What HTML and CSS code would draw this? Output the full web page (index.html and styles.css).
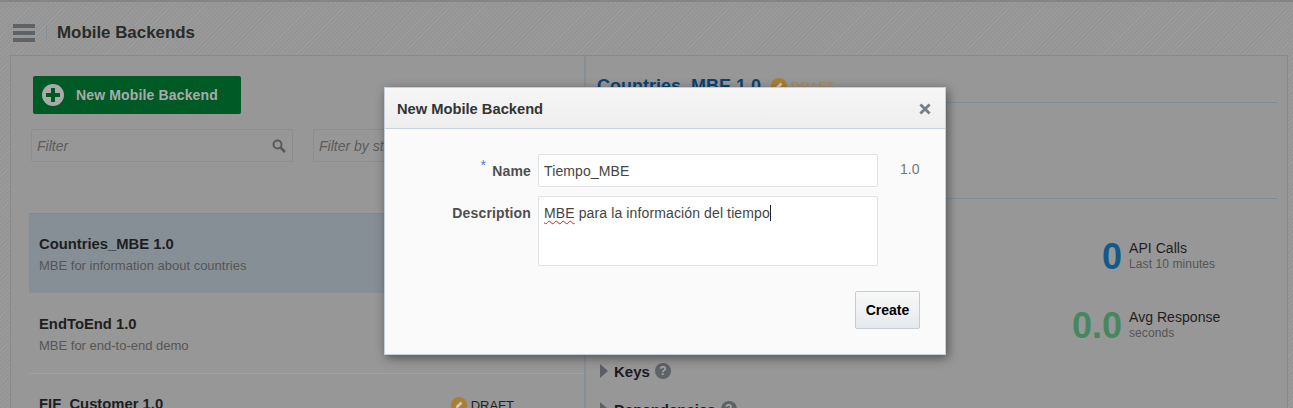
FILE: index.html
```html
<!DOCTYPE html>
<html lang="en">
<head>
<meta charset="utf-8">
<title>Mobile Backends</title>
<link rel="stylesheet" href="styles.css">
</head>
<body>
<div class="page">
  <header class="topbar">
    <svg class="burger" width="22" height="18" viewBox="0 0 22 18"><rect y="0" width="22" height="4" /><rect y="7" width="22" height="4" /><rect y="14" width="22" height="4" /></svg>
    <span class="topsep"></span>
    <h1 class="pagetitle">Mobile Backends</h1>
  </header>
  <main class="panel">
    <section class="left">
      <div class="leftpad">
        <button class="newbtn">
          <svg width="22" height="22" viewBox="0 0 22 22"><circle cx="11" cy="11" r="11" fill="#aaaaaa"/><path d="M9 4h4v5h5v4h-5v5H9v-5H4V9h5z" fill="#005a25"/></svg>
          <span>New Mobile Backend</span>
        </button>
        <div class="filters">
          <div class="filter main"><span>Filter</span>
            <svg width="14" height="14" viewBox="0 0 14 14"><circle cx="5.5" cy="5.5" r="4" fill="none" stroke="#5a5a5a" stroke-width="2"/><path d="M8.5 8.5L13 13" stroke="#5a5a5a" stroke-width="2.6"/></svg>
          </div>
          <div class="filter second"><span>Filter by status</span></div>
        </div>
      </div>
      <ul class="list">
        <li class="item selected"><div class="name">Countries_MBE 1.0</div><div class="desc">MBE for information about countries</div></li>
        <li class="item"><div class="name">EndToEnd 1.0</div><div class="desc">MBE for end-to-end demo</div></li>
        <li class="item third">
          <div class="name">FIF_Customer 1.0</div>
          <div class="draft"><svg width="16" height="16" viewBox="0 0 16 16"><circle cx="8" cy="8" r="8" fill="#aa7f30"/><path d="M4.5 11.5l1-3 4-4 2 2-4 4z" fill="#c8c8c8"/></svg><span>DRAFT</span></div>
        </li>
      </ul>
    </section>
    <section class="right">
      <div class="rtitle">
        <h2>Countries_MBE 1.0</h2>
        <svg width="16" height="16" viewBox="0 0 16 16"><circle cx="8" cy="8" r="8" fill="#aa7f30"/><path d="M4.5 11.5l1-3 4-4 2 2-4 4z" fill="#c8c8c8"/></svg>
        <span class="rdraft">DRAFT</span>
      </div>
      <div class="rbody">
        <div class="stats">
          <div class="stat">
            <span class="num blue">0</span>
            <div class="lab"><div class="l1">API Calls</div><div class="l2">Last 10 minutes</div></div>
          </div>
          <div class="stat">
            <span class="num green">0.0</span>
            <div class="lab"><div class="l1">Avg Response</div><div class="l2">seconds</div></div>
          </div>
        </div>
        <div class="acc">
          <div class="accrow"><span class="tri"></span><strong>Keys</strong><span class="help">?</span></div>
          <div class="accrow"><span class="tri"></span><strong>Dependencies</strong><span class="help">?</span></div>
        </div>
      </div>
    </section>
  </main>
</div>
<div class="dialog">
  <div class="dhead"><span>New Mobile Backend</span><svg class="close" width="12" height="12" viewBox="0 0 12 12"><path d="M1.4 1.4l9.2 9.2M10.6 1.4l-9.2 9.2" stroke="#74808a" stroke-width="2.8"/></svg></div>
  <div class="dbody">
    <div class="frow namerow">
      <label class="flabel"><sup>*</sup> Name</label>
      <div class="finput">Tiempo_MBE</div>
      <span class="ver">1.0</span>
    </div>
    <div class="frow">
      <label class="flabel">Description</label>
      <div class="finput area"><span class="spell">MBE</span> para la información del tiempo<span class="caret"></span></div>
    </div>
    <div class="dfoot"><button class="create">Create</button></div>
  </div>
</div>
</body>
</html>
```
FILE: styles.css
```css
* { box-sizing: border-box; }
html, body { margin: 0; padding: 0; height: 408px; overflow: hidden; }
body { font-family: "Liberation Sans", Arial, sans-serif; color: #333; position: relative; }
.page {
  height: 408px; width: 1293px; overflow: hidden;
  background: repeating-linear-gradient(135deg, #9a9a9a 0 1.5px, #949494 1.5px 3px);
  border-top: 2px solid #858585;
  padding: 0 5px 0 10px;
}
.topbar { height: 53px; display: flex; align-items: center; margin-left: 3px; padding-top: 8px; }
.burger { fill: #5f6366; }
.topsep { width: 1px; height: 15px; background: #838f99; margin: 0 10px 0 11px; }
.pagetitle { margin: 0; font-size: 16.9px; font-weight: bold; color: #2a2a2a; }
.panel { display: flex; height: 400px; background: #979797; border: 1px solid #8a8a8a; }
.left { width: 575px; flex: none; border-right: 2px solid #868f98; }
.leftpad { padding: 20px 0 0 22px; }
.newbtn {
  display: flex; align-items: center; gap: 12px; width: 208px; height: 38px; padding: 0 0 0 9px;
  background: #005a25; border: 0; border-radius: 2px; color: #aaa;
  font: bold 14px "Liberation Sans", Arial, sans-serif; letter-spacing: .15px;
}
.filters { display: flex; gap: 20px; margin: 15px 0 0 -2px; }
.filter {
  height: 33px; border: 1px solid #8a8e92; border-radius: 2px; display: flex; align-items: center;
  justify-content: space-between; padding: 0 6px 0 5px; font-style: italic; font-size: 14px; color: #5c5c5c;
}
.filter.main { width: 262px; }
.filter.second { width: 262px; }
.list { list-style: none; margin: 51px 0 0 18px; padding: 0; }
.item { height: 81px; padding: 22px 0 0 10px; border-bottom: 1px solid #a0a0a0; position: relative; }
.item.selected { height: 80px; padding-top: 21px; background: #878f96; border-bottom: 0; border-top: 1px solid #7f8a94; }
.name { font-size: 14.8px; font-weight: bold; color: #1e1e1e; line-height: 18px; }
.desc { font-size: 13px; color: #555; line-height: 16px; margin-top: 5px; }
.third { display: flex; justify-content: space-between; border-bottom: 0; padding-top: 21px; }
.draft { display: flex; align-items: center; gap: 4px; font-size: 13px; color: #222; height: 20px; margin-right: 70px; }
.right { flex: 1; padding: 0 10px 0 11px; }
.rtitle { display: flex; align-items: center; height: 47px; border-bottom: 1px solid #7f8c96; padding-top: 14px; gap: 5px; }
.rtitle h2 { margin: 0 5px 0 0; font-size: 18px; font-weight: bold; color: #0d4272; }
.rdraft { font-size: 13px; color: #a68c5e; margin-left: -1px; }
.rbody { position: relative; height: 300px; margin-top: 95px; border-top: 1px solid #7f8c96; }
.stats { display: flex; flex-direction: column; gap: 27px; align-items: flex-end; padding: 37px 56px 0 0; }
.stat { display: flex; align-items: center; width: 200px; justify-content: flex-end; gap: 7px; }
.stat .lab { width: 92px; margin-top: -2px; }
.num { font-size: 36px; font-weight: bold; line-height: 42px; }
.num.blue { color: #155a87; }
.num.green { color: #47875f; }
.l1 { font-size: 14px; color: #1e1e1e; line-height: 16px; letter-spacing: .05px; white-space: nowrap; }
.l2 { font-size: 12px; color: #555; line-height: 16px; letter-spacing: .1px; white-space: nowrap; }
.acc { margin-top: 14px; padding-left: 3px; }
.accrow { display: flex; align-items: center; height: 20px; margin-bottom: 18px; font-size: 15px; color: #1a1a24; }
.tri { width: 0; height: 0; border-style: solid; border-width: 7px 0 7px 8px; border-color: transparent transparent transparent #5c6066; margin-right: 6px; }
.help { width: 16px; height: 16px; border-radius: 50%; background: #5f6266; color: #a8a8a8; font-size: 12px; font-weight: bold; text-align: center; line-height: 16px; margin-left: 5px; }
.dialog {
  position: absolute; left: 384px; top: 87px; width: 562px; height: 268px;
  background: #fafafa; border: 1px solid #c5d0dc; box-shadow: 2px 3px 10px rgba(0,0,0,.45);
}
.dhead {
  height: 41px; display: flex; align-items: center; justify-content: space-between; padding: 1px 14px 0 12px;
  background: linear-gradient(#f6f6f6, #eeeeee); border-bottom: 1px solid #c5d3e2;
  font-size: 14.7px; font-weight: bold; color: #333;
}
.dbody { padding: 25px 25px 0 0; }
.frow { display: flex; margin-bottom: 9px; }
.flabel { width: 153px; height: 33px; flex: none; text-align: right; padding-right: 7px; font-size: 14px; font-weight: bold; color: #4f4f4f; line-height: 34px; letter-spacing: .15px; }
.flabel sup { color: #4a7fd0; font-weight: normal; font-size: 14px; line-height: 0; vertical-align: 6px; margin-right: 2px; }
.finput {
  width: 340px; height: 33px; flex: none; background: #fff; border: 1px solid #dfe3e8; border-radius: 2px;
  padding: 0 5px; font-size: 14px; line-height: 33px; color: #444; letter-spacing: .12px;
}
.finput.area { height: 70px; line-height: 32px; }
.namerow .ver { margin-left: 22px; font-size: 14px; color: #777; line-height: 30px; }
.spell { text-decoration: underline wavy #e02020 1px; text-underline-offset: 2px; }
.caret { display: inline-block; width: 1px; height: 16px; background: #222; vertical-align: -3px; }
.dfoot { display: flex; justify-content: flex-end; margin-top: 25px; }
.create {
  width: 65px; height: 38px; background: linear-gradient(#f8f8f8, #e6e9ec); border: 1px solid #c5ccd3; border-radius: 2px;
  font: bold 14px "Liberation Sans", Arial, sans-serif; color: #000;
}
```
